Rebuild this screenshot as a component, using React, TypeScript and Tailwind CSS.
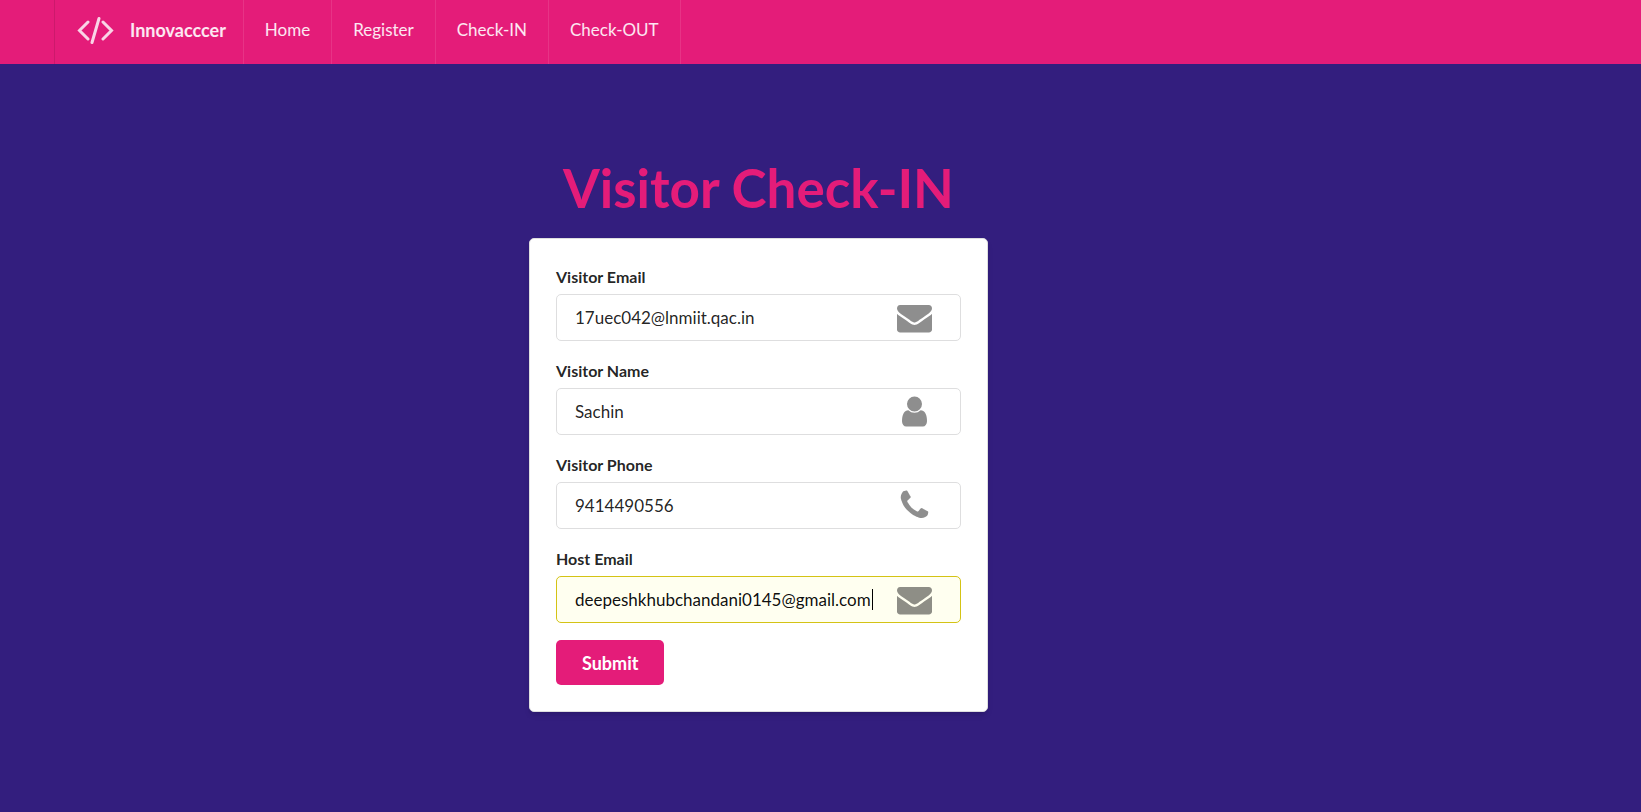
import React from "react";

const ENVELOPE =
  "M1792 710v794q0 66-47 113t-113 47h-1472q-66 0-113-47t-47-113v-794q44 49 101 87 362 246 497 345 57 42 92.5 65.5t94.5 48 110 24.5h2q51 0 110-24.5t94.5-48 92.5-65.5q170-123 498-345 57-39 100-87zm0-294q0 79-49 151t-122 123q-376 261-468 325-10 7-42.5 31t-54 38.5-52 32.5-57.5 27-50 9h-2q-23 0-50-9t-57.5-27-52-32.5-54-38.5-42.5-31q-91-64-262-182.5t-205-142.5q-62-42-117-115.5t-55-136.5q0-78 41.5-130t118.5-52h1472q65 0 112.5 47t47.5 113z";
const USER =
  "M1536 1399q0 109-62.5 187t-150.5 78h-854q-88 0-150.5-78t-62.5-187q0-85 8.5-160.5t31.5-152 58.5-131 94-89 134.5-34.5q131 128 313 128t313-128q76 0 134.5 34.5t94 89 58.5 131 31.5 152 8.5 160.5zm-256-887q0 159-112.5 271.5t-271.5 112.5-271.5-112.5-112.5-271.5 112.5-271.5 271.5-112.5 271.5 112.5 112.5 271.5z";
const PHONE =
  "M1600 1240q0 27-10 70.5t-21 68.5q-21 50-122 106-94 51-186 51-27 0-53-3.5t-57.5-12.5-47-14.5-55.5-20.5-49-18q-98-35-175-83-127-79-264-216t-216-264q-48-77-83-175-3-9-18-49t-20.5-55.5-14.5-47-12.5-57.5-3.5-53q0-92 51-186 56-101 106-122 25-11 68.5-21t70.5-10q14 0 21 3 18 6 53 76 11 19 30 54t35 63.5 31 53.5q3 4 17.5 25t21.5 35.5 7 28.5q0 20-28.5 50t-62 55-62 53-28.5 46q0 9 5 22.5t8.5 20.5 14 24 11.5 19q76 137 174 235t235 174q2 1 19 11.5t24 14 20.5 8.5 22.5 5q18 0 46-28.5t53-62 55-62 50-28.5q14 0 28.5 7t35.5 21.5 25 17.5q25 15 53.5 31t63.5 35 54 30q70 35 76 53 3 7 3 21z";

type FieldProps = {
  id: string;
  label: string;
  type: string;
  value: string;
  icon: string;
  active?: boolean;
};

function Field({ id, label, type, value, icon, active }: FieldProps) {
  return (
    <div>
      <label htmlFor={id} className="mb-[7px] block text-base leading-5 font-bold text-black/87">
        {label}
      </label>
      <div className="relative">
        <input
          id={id}
          type={type}
          defaultValue={value}
          className={
            active
              ? "block h-[47px] w-full rounded-[5px] border border-[#d4c315] bg-[#fffff0] pr-[72px] pl-[18px] text-[17px] text-black/95 outline-none"
              : "block h-[47px] w-full rounded-[5px] border border-[#dededf] bg-white pr-[72px] pl-[18px] text-[17px] text-black/87 outline-none"
          }
        />
        {active && <span className="absolute top-[13px] left-[316px] h-[21px] w-px bg-black" />}
        <svg
          viewBox="0 0 1792 1792"
          aria-hidden="true"
          className="pointer-events-none absolute top-[6px] right-[29px] size-[35px] fill-black opacity-44"
        >
          <path d={icon} />
        </svg>
      </div>
    </div>
  );
}

const LINKS = ["Home", "Register", "Check-IN", "Check-OUT"];

export default function App() {
  return (
    <div className="min-h-screen bg-[#331e7e] font-['Lato',sans-serif]">
      <nav className="flex h-16 bg-[#e41c79] pl-[54px] text-lg text-white/90">
        <a
          href="#"
          className="flex items-center gap-4 border-x border-l-black/10 border-r-white/10 pr-[17px] pb-1 pl-[22px] font-bold"
        >
          <svg
            viewBox="0 0 37 28"
            aria-hidden="true"
            className="h-7 w-[37px] fill-none stroke-current opacity-90"
            strokeWidth="3"
            strokeLinecap="round"
            strokeLinejoin="miter"
          >
            <path d="M11 6L2.5 14.5l8.5 8.5M26 6L34.5 14.5l-8.5 8.5M22 2.5L15 26.5" />
          </svg>
          Innovacccer
        </a>
        {LINKS.map((link) => (
          <a
            key={link}
            href="#"
            className="flex items-center border-r border-white/10 px-[21px] pb-1 text-[17px]"
          >
            {link}
          </a>
        ))}
      </nav>

      <main className="flex flex-col items-center pt-[91px] pr-[124px] pb-[100px]">
        <h1 className="text-[53px] leading-[66px] font-bold text-[#e41c79]">Visitor Check-IN</h1>
        <form
          className="mt-[17px] w-full max-w-[459px] rounded-[5px] border border-[#dededf] bg-white px-[26px] pt-7 pb-[26px] shadow-md"
          onSubmit={(e) => e.preventDefault()}
        >
          <div className="flex flex-col gap-5">
            <Field id="visitor-email" label="Visitor Email" type="text" value="17uec042@lnmiit.qac.in" icon={ENVELOPE} />
            <Field id="visitor-name" label="Visitor Name" type="text" value="Sachin" icon={USER} />
            <Field id="visitor-phone" label="Visitor Phone" type="tel" value="9414490556" icon={PHONE} />
            <Field
              id="host-email"
              label="Host Email"
              type="text"
              value="deepeshkhubchandani0145@gmail.com"
              icon={ENVELOPE}
              active
            />
          </div>
          <button
            type="submit"
            className="mt-[17px] block h-[45px] rounded-[5px] bg-[#e41c79] px-[26px] text-lg font-bold text-white"
          >
            Submit
          </button>
        </form>
      </main>
    </div>
  );
}
